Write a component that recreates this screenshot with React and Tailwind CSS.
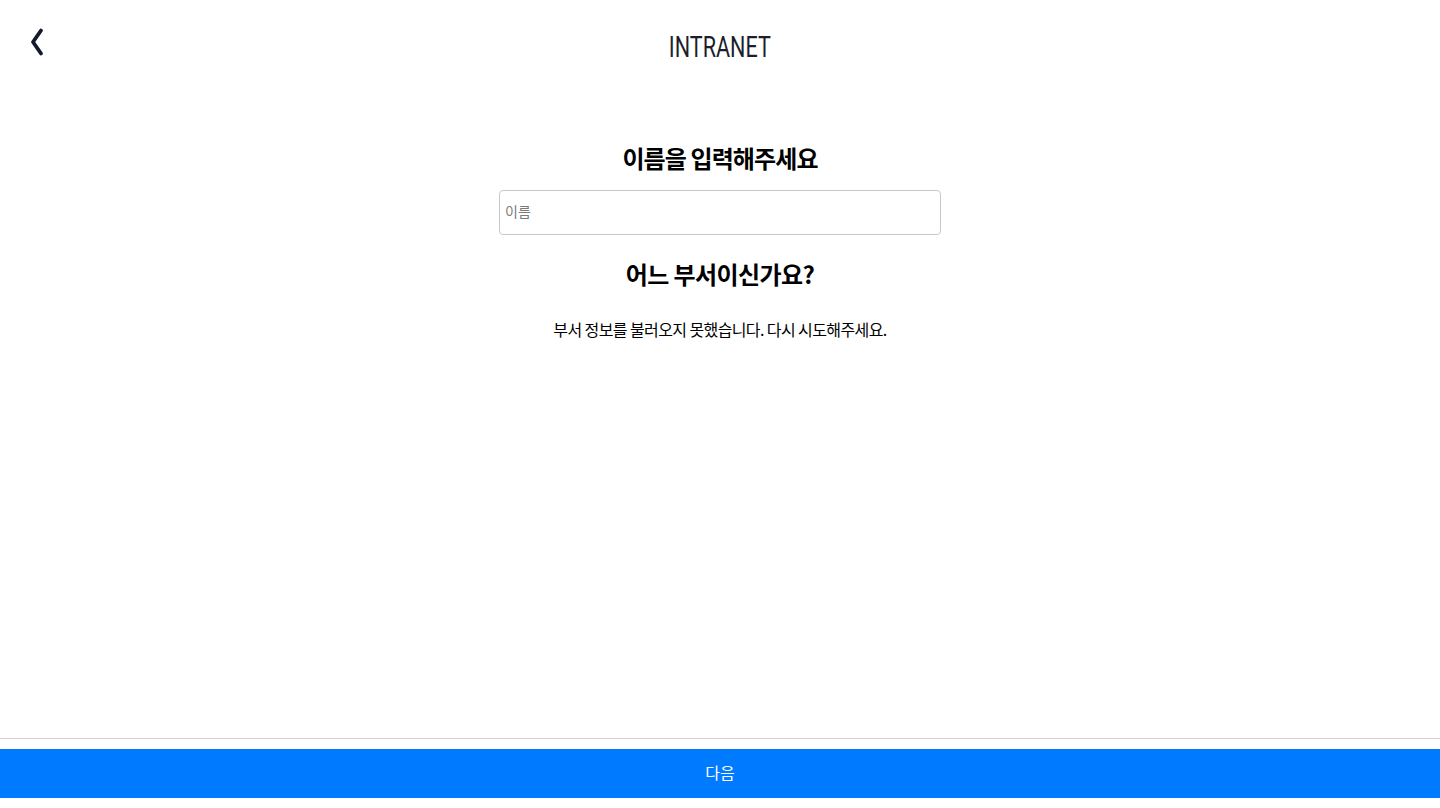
import React from "react";

export default function App() {
  const ko = { fontFamily: '"Noto Sans CJK KR", "Noto Sans", sans-serif' };
  return (
    <div className="w-[1440px] h-[808px] bg-white flex flex-col" style={ko}>
      <header className="relative h-[92px] flex items-start justify-center">
        <button className="absolute left-[28px] top-[26px] w-[18px] h-[32px]">
          <svg width="18" height="32" viewBox="0 0 18 32" fill="none">
            <path d="M13 4.5 L5 16 L13 27.5" stroke="#141a2e" strokeWidth="3.8" strokeLinecap="round" strokeLinejoin="round" />
          </svg>
        </button>
        <h1
          className="mt-[29px] text-[30px] leading-[36px] text-[#1c1f2a] scale-x-[0.72] font-normal"
          style={{ fontFamily: 'Roboto, "Liberation Sans", sans-serif' }}
        >
          INTRANET
        </h1>
      </header>
      <main className="flex-1 flex flex-col items-center">
        <h2 className="mt-[49px] text-[24px] leading-[34px] font-bold text-black tracking-[-0.9px]">이름을 입력해주세요</h2>
        <input
          className="mt-[15px] w-[442px] h-[45px] border border-[#c8c8c8] rounded-[4px] px-[5px] pb-[4px] text-[14px] placeholder-[#7a7a7a] outline-none"
          placeholder="이름"
          style={ko}
        />
        <h2 className="mt-[22px] text-[24px] leading-[34px] font-bold text-black tracking-[-0.6px]">어느 부서이신가요?</h2>
        <p className="mt-[26px] text-[16px] leading-[24px] text-black tracking-[-0.6px]">부서 정보를 불러오지 못했습니다. 다시 시도해주세요.</p>
      </main>
      <div className="h-[1px] bg-[#d4d4d4] mb-[10px]" />
      <button className="h-[49px] bg-[#007aff] text-white text-[16px] pb-[3px] mb-[10px]" style={ko}>다음</button>
    </div>
  );
}
